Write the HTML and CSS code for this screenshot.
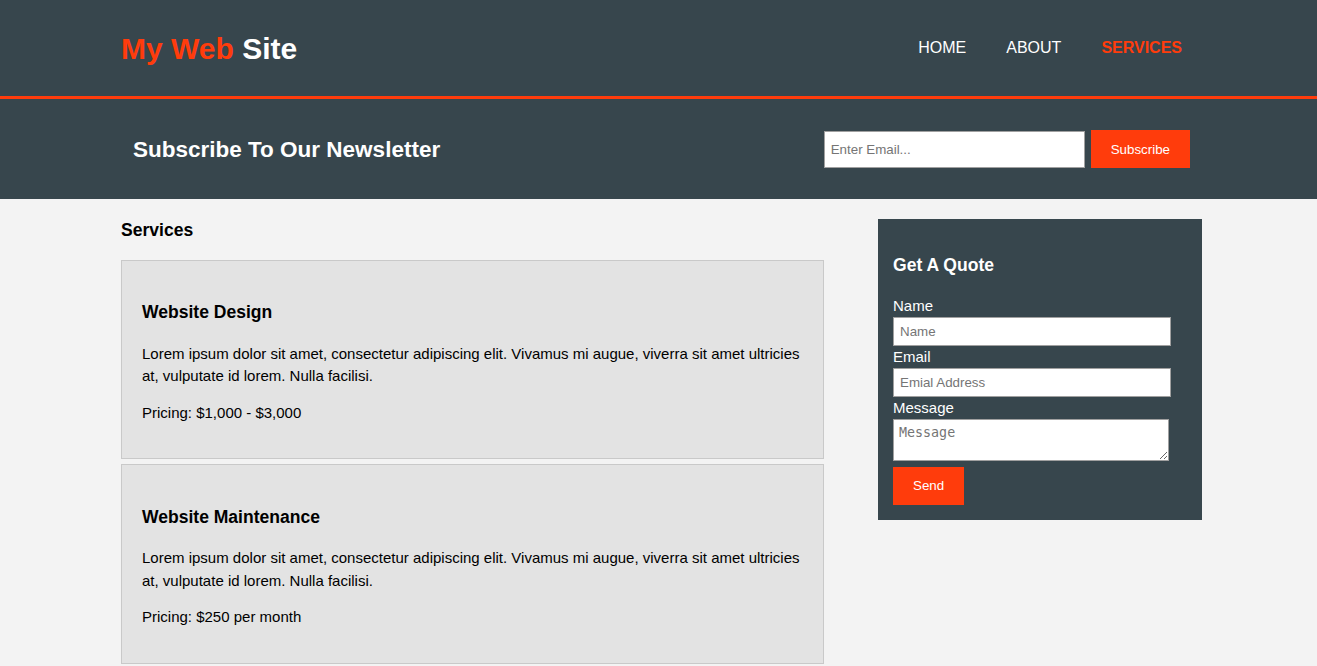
FILE: index.html
```html
<!DOCTYPE html>
<html lang="en">
<head>
<meta charset="utf-8">
<title>My Web Site | Services</title>
<link rel="stylesheet" href="styles.css">
</head>
<body>
<header class="site-header">
  <div class="container header-inner">
    <h1 class="logo"><span class="highlight">My Web</span> Site</h1>
    <nav>
      <ul class="nav-list">
        <li><a href="#">Home</a></li>
        <li><a href="#">About</a></li>
        <li class="current"><a href="#">Services</a></li>
      </ul>
    </nav>
  </div>
</header>

<section class="newsletter">
  <div class="container newsletter-inner">
    <h1 class="newsletter-title">Subscribe To Our Newsletter</h1>
    <form class="newsletter-form">
      <input class="email-input" type="email" placeholder="Enter Email...">
      <button class="btn" type="submit">Subscribe</button>
    </form>
  </div>
</section>

<section class="content">
  <div class="container content-inner">
    <article class="main-col">
      <h1 class="page-title">Services</h1>
      <ul class="services">
        <li class="service-card">
          <h3>Website Design</h3>
          <p>Lorem ipsum dolor sit amet, consectetur adipiscing elit. Vivamus mi augue, viverra sit amet ultricies at, vulputate id lorem. Nulla facilisi.</p>
          <p>Pricing: $1,000 - $3,000</p>
        </li>
        <li class="service-card">
          <h3>Website Maintenance</h3>
          <p>Lorem ipsum dolor sit amet, consectetur adipiscing elit. Vivamus mi augue, viverra sit amet ultricies at, vulputate id lorem. Nulla facilisi.</p>
          <p>Pricing: $250 per month</p>
        </li>
      </ul>
    </article>
    <aside class="sidebar">
      <h3 class="sidebar-title">Get A Quote</h3>
      <form class="quote">
        <label>Name</label>
        <input class="field" type="text" placeholder="Name">
        <label>Email</label>
        <input class="field" type="email" placeholder="Emial Address">
        <label>Message</label>
        <textarea class="area" placeholder="Message"></textarea>
        <button class="btn send" type="submit">Send</button>
      </form>
    </aside>
  </div>
</section>
</body>
</html>
```

FILE: styles.css
```css
* { box-sizing: border-box; }

body {
  margin: 0;
  font: 15px/1.5 "Liberation Sans", Arial, sans-serif;
  background: #f3f3f3;
  color: #000;
}

.container {
  width: 1081px;
  margin: 0 95px 0 121px;
}

/* Header */
.site-header {
  background: #37464d;
  border-bottom: 3px solid #ff3c0c;
  color: #fff;
}
.header-inner {
  height: 96px;
  display: flex;
  justify-content: space-between;
  align-items: center;
}
.logo {
  margin: 0;
  font-size: 30px;
  line-height: 45px;
  font-weight: bold;
  padding-top: 1px;
}
.highlight { color: #ff3c0c; }

.nav-list {
  list-style: none;
  margin: 0;
  padding: 0;
  display: flex;
}
.nav-list li {
  padding: 0 20px;
  font-size: 16px;
  line-height: 24px;
}
.nav-list a {
  color: #fff;
  text-decoration: none;
  text-transform: uppercase;
}
.nav-list .current a {
  color: #ff3c0c;
  font-weight: bold;
}

/* Newsletter */
.newsletter {
  background: #37464d;
  color: #fff;
}
.newsletter-inner {
  height: 100px;
  padding: 0 12px;
  display: flex;
  justify-content: space-between;
  align-items: center;
}
.newsletter-title {
  margin: 0;
  font-size: 22.5px;
  line-height: 33px;
}
.newsletter-form {
  display: flex;
  align-items: center;
  gap: 6px;
}
.email-input {
  width: 261px;
  height: 37px;
  padding: 4px 6px;
  border: 1px solid #a0a0a0;
  font: 13.33px "Liberation Sans", Arial, sans-serif;
  background: #fff;
  margin-top: 1px;
}
.email-input::placeholder,
.field::placeholder { color: #757575; }

.btn {
  height: 38px;
  padding: 0 20px;
  border: 0;
  background: #ff3c0c;
  color: #fff;
  font: 13.33px "Liberation Sans", Arial, sans-serif;
}

/* Content */
.content-inner {
  display: flex;
  gap: 54px;
  align-items: flex-start;
}
.main-col { width: 703px; }

.page-title {
  margin: 17.5px 0 17px;
  font-size: 17.55px;
  line-height: 26.3px;
}

.services {
  list-style: none;
  margin: 0;
  padding: 0;
  display: flex;
  flex-direction: column;
  gap: 5px;
}
.service-card {
  background: #e3e3e3;
  border: 1px solid #c9c9c9;
  padding: 20px;
}
.service-card h3 {
  margin: 18.5px 0 17.3px;
  font-size: 17.55px;
  line-height: 26.3px;
}
.service-card p { margin: 14px 0; }
.service-card h3 + p { margin-top: 0; }
.service-card p:last-child { margin-bottom: 14px; }

/* Sidebar */
.sidebar {
  width: 324px;
  margin-top: 20px;
  padding: 15px;
  background: #37464d;
  color: #fff;
}
.sidebar-title {
  margin: 17.55px 0 17px;
  font-size: 17.55px;
  line-height: 26.3px;
}
.quote {
  display: flex;
  flex-direction: column;
  align-items: flex-start;
}
.quote label { line-height: 22px; }
.field {
  width: 278px;
  height: 29px;
  padding: 5px 6px;
  border: 1px solid #a0a0a0;
  font: 13.33px "Liberation Sans", Arial, sans-serif;
  background: #fff;
}
.area {
  width: 276px;
  height: 42px;
  padding: 5px;
  border: 1px solid #a0a0a0;
  font: 13.33px "DejaVu Sans Mono", monospace;
  background: #fff;
}
.area::placeholder { color: #757575; }
.send { margin-top: 6px; }
```
